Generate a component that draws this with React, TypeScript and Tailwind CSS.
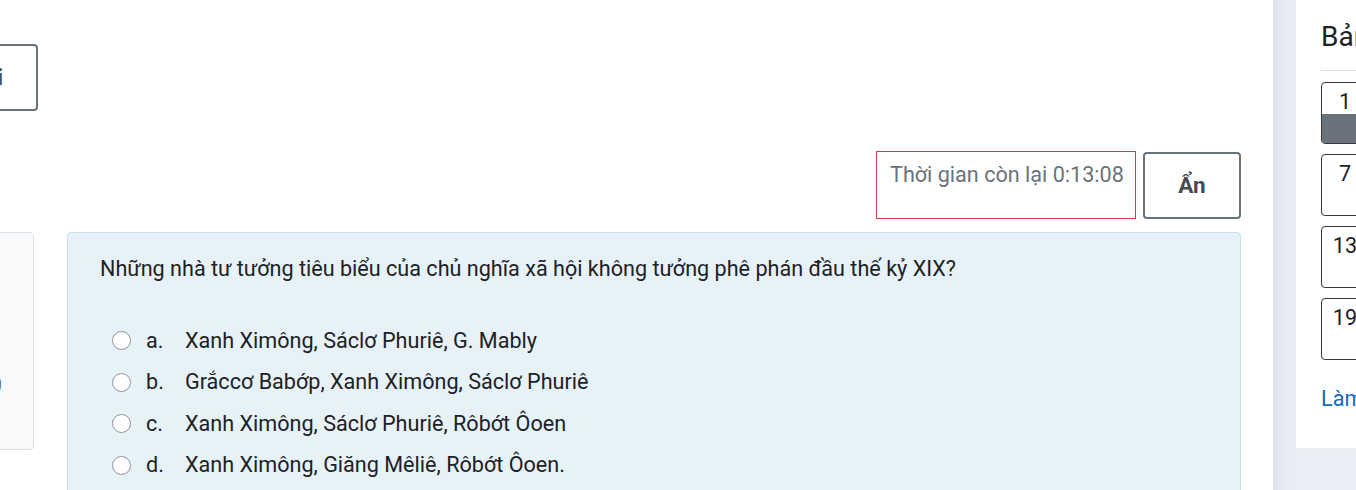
import React from "react";

const font = { fontFamily: "Roboto, 'Noto Sans', 'Liberation Sans', sans-serif" };

function Radio() {
  return (
    <span className="inline-block w-[19px] h-[19px] rounded-full border-[1.5px] border-[#8e949b] bg-white shrink-0" />
  );
}

const options = [
  ["a.", "Xanh Ximông, Sáclơ Phuriê, G. Mably"],
  ["b.", "Grắccơ Babớp, Xanh Ximông, Sáclơ Phuriê"],
  ["c.", "Xanh Ximông, Sáclơ Phuriê, Rôbớt Ôoen"],
  ["d.", "Xanh Ximông, Giăng Mêliê, Rôbớt Ôoen."],
];

export default function App() {
  return (
    <div className="w-[1356px] h-[490px] overflow-hidden flex bg-[#e9edf4] text-[#1d2125]" style={font}>
      {/* main */}
      <div className="w-[1273px] h-full bg-white shrink-0 overflow-hidden pr-[32px]">
        <div className="pt-[44px]">
          <div className="ml-[-100px] w-[138px] h-[67px] border-2 border-[#6a737b] rounded-[4px] flex items-center justify-end pr-[33px] overflow-hidden">
            <span className="text-[22px] font-bold text-[#495057] whitespace-nowrap">Nộp bài</span>
          </div>
        </div>
        <div className="mt-[40px] flex justify-end gap-[7px]">
          <div className="w-[260px] h-[68px] border border-[#d7384a] px-[13px] pt-[8px] text-[21.6px] leading-[30px] text-[#6a737b] whitespace-nowrap">
            Thời gian còn lại 0:13:08
          </div>
          <div className="mt-[1px] w-[98px] h-[67px] border-2 border-[#6a737b] rounded-[4px] flex items-center justify-center text-[22.5px] font-bold text-[#464a4e]">
            Ẩn
          </div>
        </div>
        <div className="mt-[13px] flex gap-[33px]">
          <div className="ml-[-100px] w-[134px] h-[218px] shrink-0 border border-[#dee2e6] rounded-[4px] bg-[#f8f9fa] overflow-hidden flex flex-col items-end pr-[31px] pt-[137px]">
            <span className="text-[20px] text-[#6a737b] whitespace-nowrap">1,00</span>
          </div>
          <div className="flex-1 h-[280px] border border-[#c6e1ea] rounded-[4px] bg-[#e7f2f8] pl-[32px] pt-[21px]">
            <div className="text-[21.6px] leading-[30px] whitespace-nowrap">
              Những nhà tư tưởng tiêu biểu của chủ nghĩa xã hội không tưởng phê phán đầu thế kỷ XIX?
            </div>
            <div className="mt-[36px] pl-[12px]">
              {options.map(([l, t]) => (
                <div key={l} className="h-[41.5px] flex items-center text-[21.6px] whitespace-nowrap">
                  <Radio />
                  <span className="ml-[15px] w-[39px]">{l}</span>
                  <span>{t}</span>
                </div>
              ))}
            </div>
          </div>
        </div>
      </div>
      {/* gap strip */}
      <div className="w-[23px] h-full shrink-0 bg-gradient-to-r from-[#dde1e9] via-[#e8ebf2] to-[#eaedf4]" />
      {/* side panel */}
      <div className="flex-1 h-[448px] bg-white overflow-hidden pl-[25px]">
        <div className="pt-[19px] h-[71px] border-b border-[#dee2e6] w-[200px]">
          <div className="text-[28px] leading-[36px] whitespace-nowrap text-[#1d2125]">Bảng câu hỏi</div>
        </div>
        <div className="mt-[11px] flex flex-col gap-[10px]">
          {["1", "7", "13", "19"].map((n, i) => (
            <div
              key={n}
              className="w-[48px] h-[62px] border border-[#343a40] rounded-[4px] overflow-hidden flex flex-col"
            >
              <div className="h-[31px] flex items-end justify-center text-[21.6px] leading-[24px] text-[#1d2125]">{n}</div>
              <div className={i === 0 ? "flex-1 bg-[#6a737b]" : "flex-1"} />
            </div>
          ))}
        </div>
        <div className="mt-[24px] text-[21.6px] leading-[30px] text-[#0f6cbf] whitespace-nowrap">Làm xong...</div>
      </div>
    </div>
  );
}
